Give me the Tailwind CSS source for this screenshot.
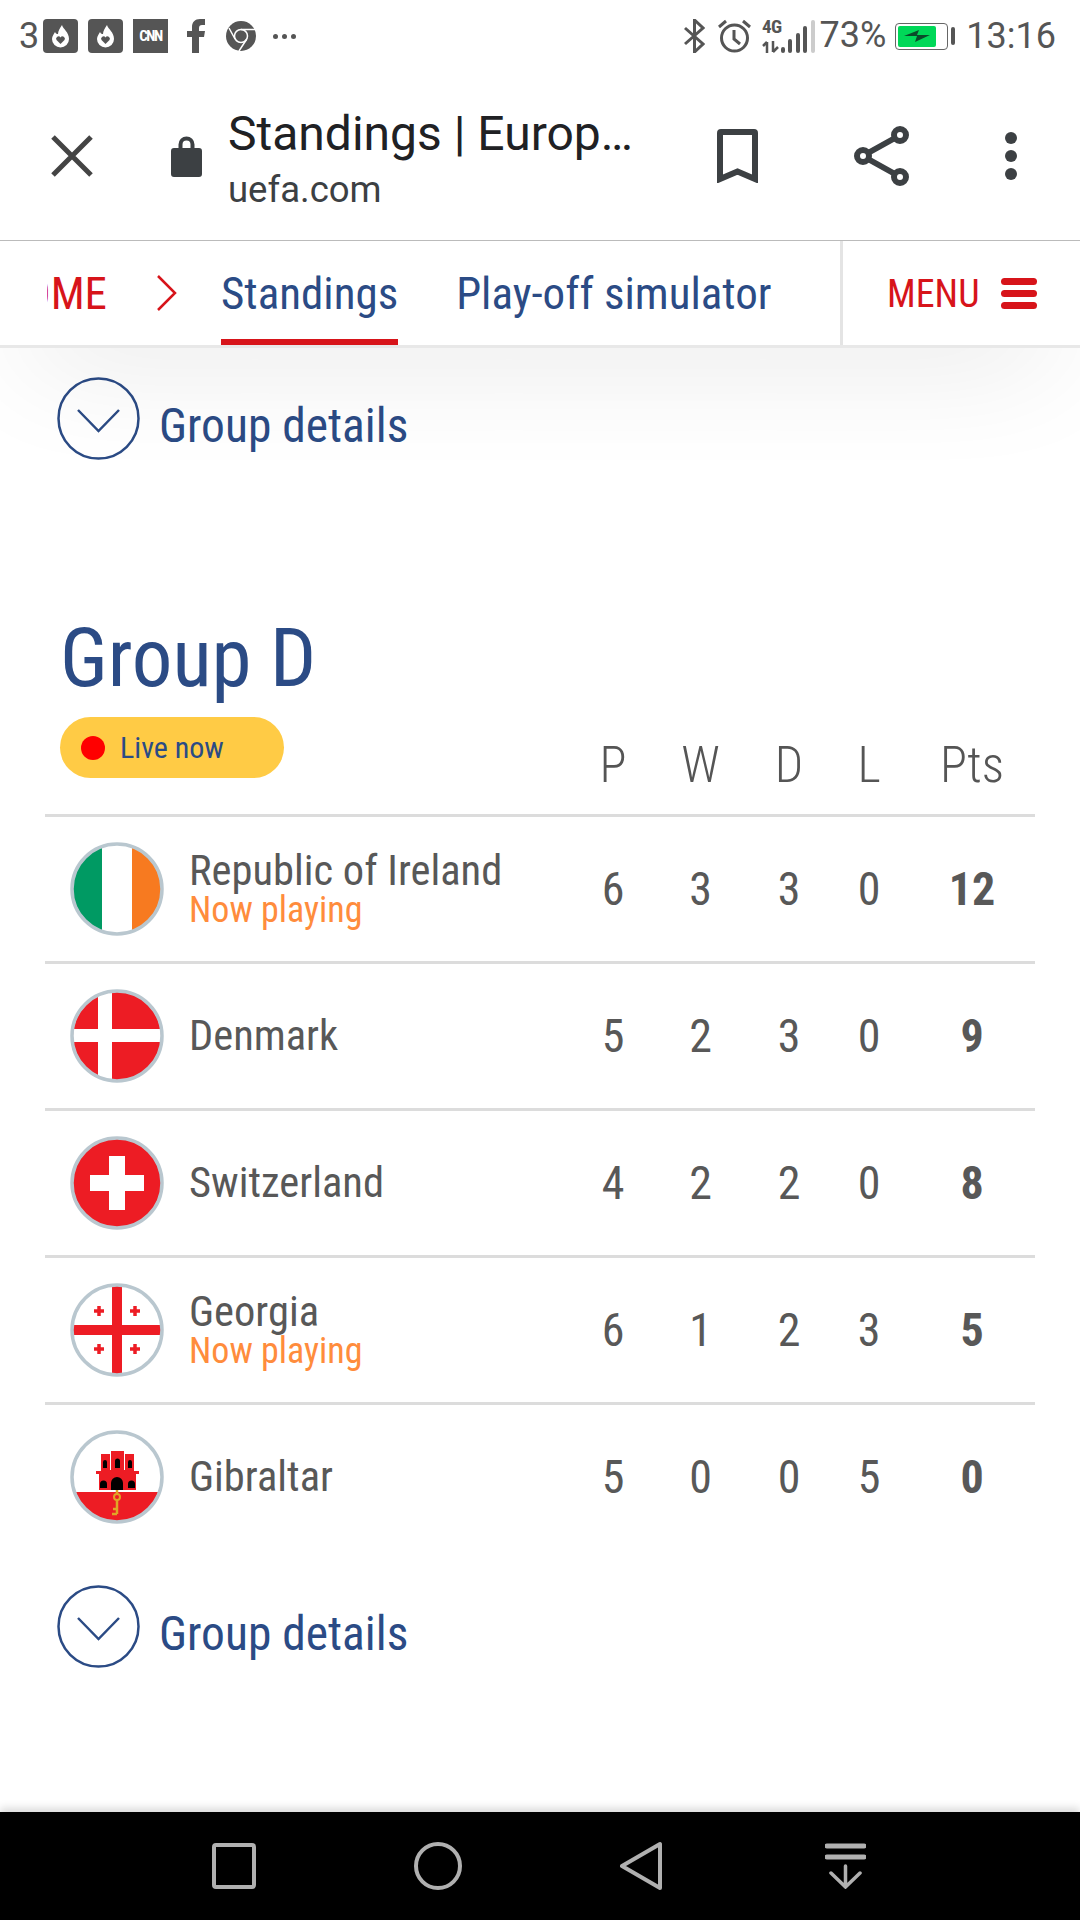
<!DOCTYPE html>
<html lang="en">
<head>
    <meta charset="UTF-8">
    <meta name="viewport" content="width=device-width, initial-scale=1.0">
    <title>Standings | UEFA</title>
    <script src="https://cdn.jsdelivr.net/npm/@tailwindcss/browser@4"></script>
</head>
<body class="bg-white font-['Roboto',sans-serif]">
<div class="w-[1080px] h-[1920px] flex flex-col overflow-hidden">

    <!-- Status bar -->
    <div class="h-[72px] shrink-0 relative z-20 bg-white flex items-center justify-between pl-[19px] pr-[24px] text-[#555] text-[36px]">
        <div class="flex items-center h-[34px]">
            <span class="w-[24px]">3</span>
            <svg class="w-[35px] h-[34px]" viewBox="0 0 35 34"><rect width="35" height="34" rx="4" fill="#555"/><path d="M19 6c1 4 7 7 7 14a8.500 8.500 0 0 1-17 0c0-3 2-5 3-7 1 2 2 2 3 2 0-3 2-6 4-9z" fill="#fff"/><path d="M17.500 25l-4-4a2.300 2.300 0 0 1 4-2.500 2.300 2.300 0 0 1 4 2.500z" fill="#555"/></svg>
            <svg class="w-[35px] h-[34px] ml-[10px]" viewBox="0 0 35 34"><rect width="35" height="34" rx="4" fill="#555"/><path d="M19 6c1 4 7 7 7 14a8.500 8.500 0 0 1-17 0c0-3 2-5 3-7 1 2 2 2 3 2 0-3 2-6 4-9z" fill="#fff"/><path d="M17.500 25l-4-4a2.300 2.300 0 0 1 4-2.500 2.300 2.300 0 0 1 4 2.500z" fill="#555"/></svg>
            <span class="w-[35px] h-[34px] ml-[10px] bg-[#555] flex items-center justify-center text-white text-[15px] font-bold tracking-[-1.500px] [font-stretch:75%]">CNN</span>
            <svg class="w-[18px] h-[34px] ml-[19px]" viewBox="0 0 18 34"><path d="M5 34V18H0v-6h5V8c0-5 3-8 8-8h5v6h-3c-2 0-3 1-3 3v3h6l-1 6h-5v16z" fill="#555"/></svg>
            <svg class="w-[30px] h-[30px] ml-[21px]" viewBox="0 0 30 30"><circle cx="15" cy="15" r="15" fill="#555"/><circle cx="15" cy="15" r="6.500" fill="#555" stroke="#fff" stroke-width="1.500"/><path d="M15 8.500h14M9 18L3 7M20.500 18.500L13 30" stroke="#fff" stroke-width="1.500" fill="none"/></svg>
            <div class="flex gap-[4px] ml-[17px]">
                <span class="w-[5px] h-[5px] rounded-full bg-[#555]"></span>
                <span class="w-[5px] h-[5px] rounded-full bg-[#555]"></span>
                <span class="w-[5px] h-[5px] rounded-full bg-[#555]"></span>
            </div>
        </div>
        <div class="flex items-center h-[34px]">
            <svg class="w-[21px] h-[34px]" viewBox="0 0 21 34" fill="none" stroke="#555" stroke-width="3"><path d="M1 9l18 16-8.500 8V1L19 9 1 25"/></svg>
            <svg class="w-[33px] h-[34px] ml-[13px]" viewBox="0 0 33 34" fill="none" stroke="#555" stroke-width="3"><circle cx="16.500" cy="19" r="13"/><path d="M16 11v9l6 5M1 8l7-6M32 8l-7-6"/></svg>
            <div class="w-[18px] h-[34px] ml-[11px] flex flex-col justify-between">
                <span class="text-[19px] leading-[15px] font-bold [font-stretch:75%] tracking-[-0.5px]">4G</span>
                <svg class="w-[18px] h-[12px]" viewBox="0 0 18 12" fill="none" stroke="#555" stroke-width="2.500"><path d="M5 12V1M1 5l4-4M11 0v11M11 11l5-5"/></svg>
            </div>
            <div class="flex items-end gap-[3.500px] h-[34px] ml-[1px]">
                <span class="w-[3.500px] h-[6px] rounded-full bg-[#555]"></span>
                <span class="w-[4px] h-[14px] rounded-full bg-[#555]"></span>
                <span class="w-[4px] h-[20px] rounded-full bg-[#555]"></span>
                <span class="w-[4px] h-[27px] rounded-full bg-[#555]"></span>
                <span class="w-[4px] h-[33px] rounded-full bg-[#ccc]"></span>
            </div>
            <span class="ml-[5px] -mt-[3px] leading-none">73%</span>
            <div class="ml-[9px] w-[53px] h-[27px] rounded-[4px] border-[1.500px] border-[#666] p-[2px]">
                <div class="w-[38px] h-full bg-[#00d858] rounded-[2px] flex items-center justify-center">
                    <svg class="w-[26px] h-[14px]" viewBox="0 0 26 14"><path d="M0 7l15-6-2 5h13l-15 7 2-6z" fill="#0a4a2a"/></svg>
                </div>
            </div>
            <span class="w-[4px] h-[18px] ml-[3px] bg-[#555] rounded-full"></span>
            <span class="ml-[11px] leading-none">13:16</span>
        </div>
    </div>

    <!-- Custom tab toolbar -->
    <div class="h-[169px] shrink-0 flex items-center border-b border-[#bbb] relative z-20 bg-white">
        <svg class="w-[42px] h-[42px] ml-[51px] shrink-0" viewBox="0 0 42 42" stroke="#444" stroke-width="5"><path d="M2 2l38 38M40 2L2 40"/></svg>
        <svg class="w-[31px] h-[42px] ml-[78px] shrink-0" viewBox="0 0 31 42"><path d="M3 13h4.500V9.500a8 8 0 0 1 16 0V13H28a3 3 0 0 1 3 3v23a3 3 0 0 1-3 3H3a3 3 0 0 1-3-3V16a3 3 0 0 1 3-3zM11.500 13h8V9.500a4 4 0 0 0-8 0z" fill="#3c4043" fill-rule="evenodd"/></svg>
        <div class="ml-[26px] w-[430px] shrink-0 pt-[7px]">
            <div class="text-[48px] leading-[54px] text-[#202124] whitespace-nowrap">Standings | Europ…</div>
            <div class="text-[36.500px] leading-[44px] mt-[7px] text-[#3c4043]">uefa.com</div>
        </div>
        <svg class="w-[41px] h-[54px] ml-[59px] shrink-0" viewBox="0 0 41 54" fill="none" stroke="#3c4043" stroke-width="6"><path d="M3 50V4a1 1 0 0 1 1-1h33a1 1 0 0 1 1 1v46l-17.500-7.500z"/></svg>
        <svg class="w-[55px] h-[60px] ml-[96px] shrink-0" viewBox="0 0 55 60" fill="none" stroke="#3c4043" stroke-width="6"><circle cx="9" cy="30" r="6"/><circle cx="46" cy="9" r="6"/><circle cx="46" cy="51" r="6"/><path d="M14 27l27-15M14 33l27 15"/></svg>
        <svg class="w-[12px] h-[48px] ml-[96px] shrink-0" viewBox="0 0 12 48" fill="#3c4043"><circle cx="6" cy="6" r="6"/><circle cx="6" cy="24" r="6"/><circle cx="6" cy="42" r="6"/></svg>
    </div>

    <!-- UEFA section nav -->
    <nav class="h-[107px] shrink-0 flex items-stretch border-b-[3px] border-[#e8e8e8] relative z-10 bg-white shadow-[0_30px_120px_-30px_rgba(0,0,0,0.16)] text-[45px] [font-stretch:75%]">
        <div class="w-[799px] shrink-0 flex items-center overflow-hidden relative">
            <span class="absolute left-[47px] w-[60px] overflow-hidden text-[#d7141a] whitespace-nowrap flex justify-end pt-[2px]">HOME</span>
            <svg class="absolute left-[157px] w-[20px] h-[36px]" viewBox="0 0 20 36" fill="none" stroke="#d7141a" stroke-width="2.500"><path d="M1 1l17 17L1 35"/></svg>
            <div class="ml-[221px] h-full flex items-center border-b-[6px] border-[#d7141a] pt-[8px] text-[#2b4b85]">Standings</div>
            <div class="ml-[58px] pt-[2px] text-[#2b4b85]">Play-off simulator</div>
        </div>
        <div class="ml-[41px] flex-1 border-l-[3px] border-[#e4e4e4] flex items-center pl-[44px]">
            <span class="text-[38px] text-[#d7141a] pt-[2px]">MENU</span>
            <div class="ml-[22px] w-[36px] flex flex-col gap-[5px]">
                <span class="h-[7px] rounded-full bg-[#d7141a]"></span>
                <span class="h-[7px] rounded-full bg-[#d7141a]"></span>
                <span class="h-[7px] rounded-full bg-[#d7141a]"></span>
            </div>
        </div>
    </nav>

    <!-- Page content -->
    <main class="flex-1 px-[45px] [font-stretch:75%]">
        <a class="flex items-center mt-[29px] ml-[12px] text-[47.500px] leading-[56px] text-[#2b4b85]">
            <svg class="w-[83px] h-[83px] shrink-0" viewBox="0 0 83 83" fill="none" stroke="#2b4b85" stroke-width="2.500"><circle cx="41.500" cy="41.500" r="40"/><path d="M21 33l20.500 21L62 33"/></svg>
            <span class="ml-[19px] mt-[14px]">Group details</span>
        </a>

        <h2 class="mt-[159px] mb-[18px] ml-[15px] text-[81px] leading-[80px] text-[#2b4b85]">Group D</h2>

        <div class="grid grid-cols-[1fr_78px_77px_80px_60px_126px] gap-x-[10px] h-[100px] items-center text-center text-[50px] text-[#555] [font-weight:350] border-b-[3px] border-[#dcdcdc]">
            <div class="self-start ml-[15px] w-[224px] h-[61px] rounded-full bg-[#ffcb45] flex items-center text-left">
                <span class="w-[24px] h-[24px] ml-[21px] rounded-full bg-[#ff0000]"></span>
                <span class="ml-[15px] text-[30px] text-[#2b4b85] font-normal">Live now</span>
            </div>
            <div>P</div><div>W</div><div>D</div><div>L</div><div>Pts</div>
        </div>

        <!-- Republic of Ireland -->
        <div class="grid grid-cols-[1fr_78px_77px_80px_60px_126px] gap-x-[10px] h-[147px] items-center text-center text-[46px] text-[#585858] [font-weight:375] border-b-[3px] border-[#dcdcdc]">
            <div class="flex items-center text-left font-normal">
                <svg class="w-[94px] h-[94px] ml-[25px] shrink-0" viewBox="0 0 94 94"><clipPath id="c1"><circle cx="47" cy="47" r="44"/></clipPath><g clip-path="url(#c1)"><rect width="94" height="94" fill="#fff"/><rect width="32" height="94" fill="#009a63"/><rect x="62" width="32" height="94" fill="#f77a20"/></g><circle cx="47" cy="47" r="45" fill="none" stroke="#b9c7cf" stroke-width="3.500"/></svg>
                <div class="ml-[25px]">
                    <div class="text-[42.500px] leading-[40px] whitespace-nowrap">Republic of Ireland</div>
                    <div class="text-[36px] leading-[36px] text-[#ff8c3c] pt-[1px]">Now playing</div>
                </div>
            </div>
            <div>6</div><div>3</div><div>3</div><div>0</div><div class="font-bold">12</div>
        </div>

        <!-- Denmark -->
        <div class="grid grid-cols-[1fr_78px_77px_80px_60px_126px] gap-x-[10px] h-[147px] items-center text-center text-[46px] text-[#585858] [font-weight:375] border-b-[3px] border-[#dcdcdc]">
            <div class="flex items-center text-left font-normal">
                <svg class="w-[94px] h-[94px] ml-[25px] shrink-0" viewBox="0 0 94 94"><clipPath id="c2"><circle cx="47" cy="47" r="44"/></clipPath><g clip-path="url(#c2)"><rect width="94" height="94" fill="#ed1c24"/><rect x="28" width="14" height="94" fill="#fff"/><rect y="40" width="94" height="13" fill="#fff"/></g><circle cx="47" cy="47" r="45" fill="none" stroke="#b9c7cf" stroke-width="3.500"/></svg>
                <div class="ml-[25px] text-[42.500px]">Denmark</div>
            </div>
            <div>5</div><div>2</div><div>3</div><div>0</div><div class="font-bold">9</div>
        </div>

        <!-- Switzerland -->
        <div class="grid grid-cols-[1fr_78px_77px_80px_60px_126px] gap-x-[10px] h-[147px] items-center text-center text-[46px] text-[#585858] [font-weight:375] border-b-[3px] border-[#dcdcdc]">
            <div class="flex items-center text-left font-normal">
                <svg class="w-[94px] h-[94px] ml-[25px] shrink-0" viewBox="0 0 94 94"><clipPath id="c3"><circle cx="47" cy="47" r="44"/></clipPath><g clip-path="url(#c3)"><rect width="94" height="94" fill="#ed1c24"/><path d="M39 20h16v19h19v16H55v19H39V55H20V39h19z" fill="#fff"/></g><circle cx="47" cy="47" r="45" fill="none" stroke="#b9c7cf" stroke-width="3.500"/></svg>
                <div class="ml-[25px] text-[42.500px]">Switzerland</div>
            </div>
            <div>4</div><div>2</div><div>2</div><div>0</div><div class="font-bold">8</div>
        </div>

        <!-- Georgia -->
        <div class="grid grid-cols-[1fr_78px_77px_80px_60px_126px] gap-x-[10px] h-[147px] items-center text-center text-[46px] text-[#585858] [font-weight:375] border-b-[3px] border-[#dcdcdc]">
            <div class="flex items-center text-left font-normal">
                <svg class="w-[94px] h-[94px] ml-[25px] shrink-0" viewBox="0 0 94 94"><clipPath id="c4"><circle cx="47" cy="47" r="44"/></clipPath><g clip-path="url(#c4)"><rect width="94" height="94" fill="#fff"/><rect x="42" width="10" height="94" fill="#ed1c24"/><rect y="42" width="94" height="10" fill="#ed1c24"/><path d="M29 23v10M24 28h10M65 23v10M60 28h10M29 61v10M24 66h10M65 61v10M60 66h10" stroke="#ed1c24" stroke-width="3.500"/></g><circle cx="47" cy="47" r="45" fill="none" stroke="#b9c7cf" stroke-width="3.500"/></svg>
                <div class="ml-[25px]">
                    <div class="text-[42.500px] leading-[40px]">Georgia</div>
                    <div class="text-[36px] leading-[36px] text-[#ff8c3c] pt-[1px]">Now playing</div>
                </div>
            </div>
            <div>6</div><div>1</div><div>2</div><div>3</div><div class="font-bold">5</div>
        </div>

        <!-- Gibraltar -->
        <div class="grid grid-cols-[1fr_78px_77px_80px_60px_126px] gap-x-[10px] h-[144px] items-center text-center text-[46px] text-[#585858] [font-weight:375]">
            <div class="flex items-center text-left font-normal">
                <svg class="w-[94px] h-[94px] ml-[25px] shrink-0" viewBox="0 0 94 94"><clipPath id="c5"><circle cx="47" cy="47" r="44"/></clipPath><g clip-path="url(#c5)"><rect width="94" height="94" fill="#fff"/><rect y="62" width="94" height="32" fill="#ed1c24"/><path d="M26 41h5V24h9v16h1V21h13v19h1V24h9v17h5v3h-3v16H29V44h-3z" fill="#ed1c24"/><path d="M33 38v-6a2 2 0 0 1 4 0v6zM45 38v-7a2.500 2.500 0 0 1 5 0v7zM58 38v-6a2 2 0 0 1 4 0v6zM30 58v-4a3.500 3.500 0 0 1 7 0v4zM41 60v-7a6 6 0 0 1 12 0v7zM58 58v-4a3.500 3.500 0 0 1 7 0v4z" fill="#000"/><path d="M47 60v5M47 70v14M47 84h-5M47 79h-4" stroke="#e0a526" stroke-width="2.500" fill="none"/><circle cx="47" cy="67" r="3" fill="none" stroke="#e0a526" stroke-width="2"/></g><circle cx="47" cy="47" r="45" fill="none" stroke="#b9c7cf" stroke-width="3.500"/></svg>
                <div class="ml-[25px] text-[42.500px]">Gibraltar</div>
            </div>
            <div>5</div><div>0</div><div>0</div><div>5</div><div class="font-bold">0</div>
        </div>

        <a class="flex items-center mt-[36px] ml-[12px] text-[47.500px] leading-[56px] text-[#2b4b85]">
            <svg class="w-[83px] h-[83px] shrink-0" viewBox="0 0 83 83" fill="none" stroke="#2b4b85" stroke-width="2.500"><circle cx="41.500" cy="41.500" r="40"/><path d="M21 33l20.500 21L62 33"/></svg>
            <span class="ml-[19px] mt-[14px]">Group details</span>
        </a>
    </main>

    <!-- Android navigation bar -->
    <div class="h-[108px] shrink-0 bg-black relative shadow-[0_-4px_8px_rgba(0,0,0,0.15)]">
        <div class="flex items-center h-full">
            <svg class="w-[44px] h-[46px] ml-[212px] shrink-0" viewBox="0 0 44 46" fill="none" stroke="#b0b0b0" stroke-width="4"><rect x="2" y="2" width="40" height="42" rx="2"/></svg>
            <svg class="w-[48px] h-[48px] ml-[158px] shrink-0" viewBox="0 0 48 48" fill="none" stroke="#b0b0b0" stroke-width="4"><circle cx="24" cy="24" r="22"/></svg>
            <svg class="w-[42px] h-[50px] ml-[158px] shrink-0" viewBox="0 0 42 50" fill="none" stroke="#b0b0b0" stroke-width="4" stroke-linejoin="round"><path d="M40 3v44L2 25z"/></svg>
            <svg class="w-[41px] h-[46px] ml-[163px] shrink-0" viewBox="0 0 41 46" fill="none" stroke="#b0b0b0" stroke-linecap="round"><path d="M2 3h37M2 14h37" stroke-width="5"/><path d="M20.500 23v21M6 30l14.500 14L35 30" stroke-width="3.500"/></svg>
        </div>
    </div>
</div>
</body>
</html>
